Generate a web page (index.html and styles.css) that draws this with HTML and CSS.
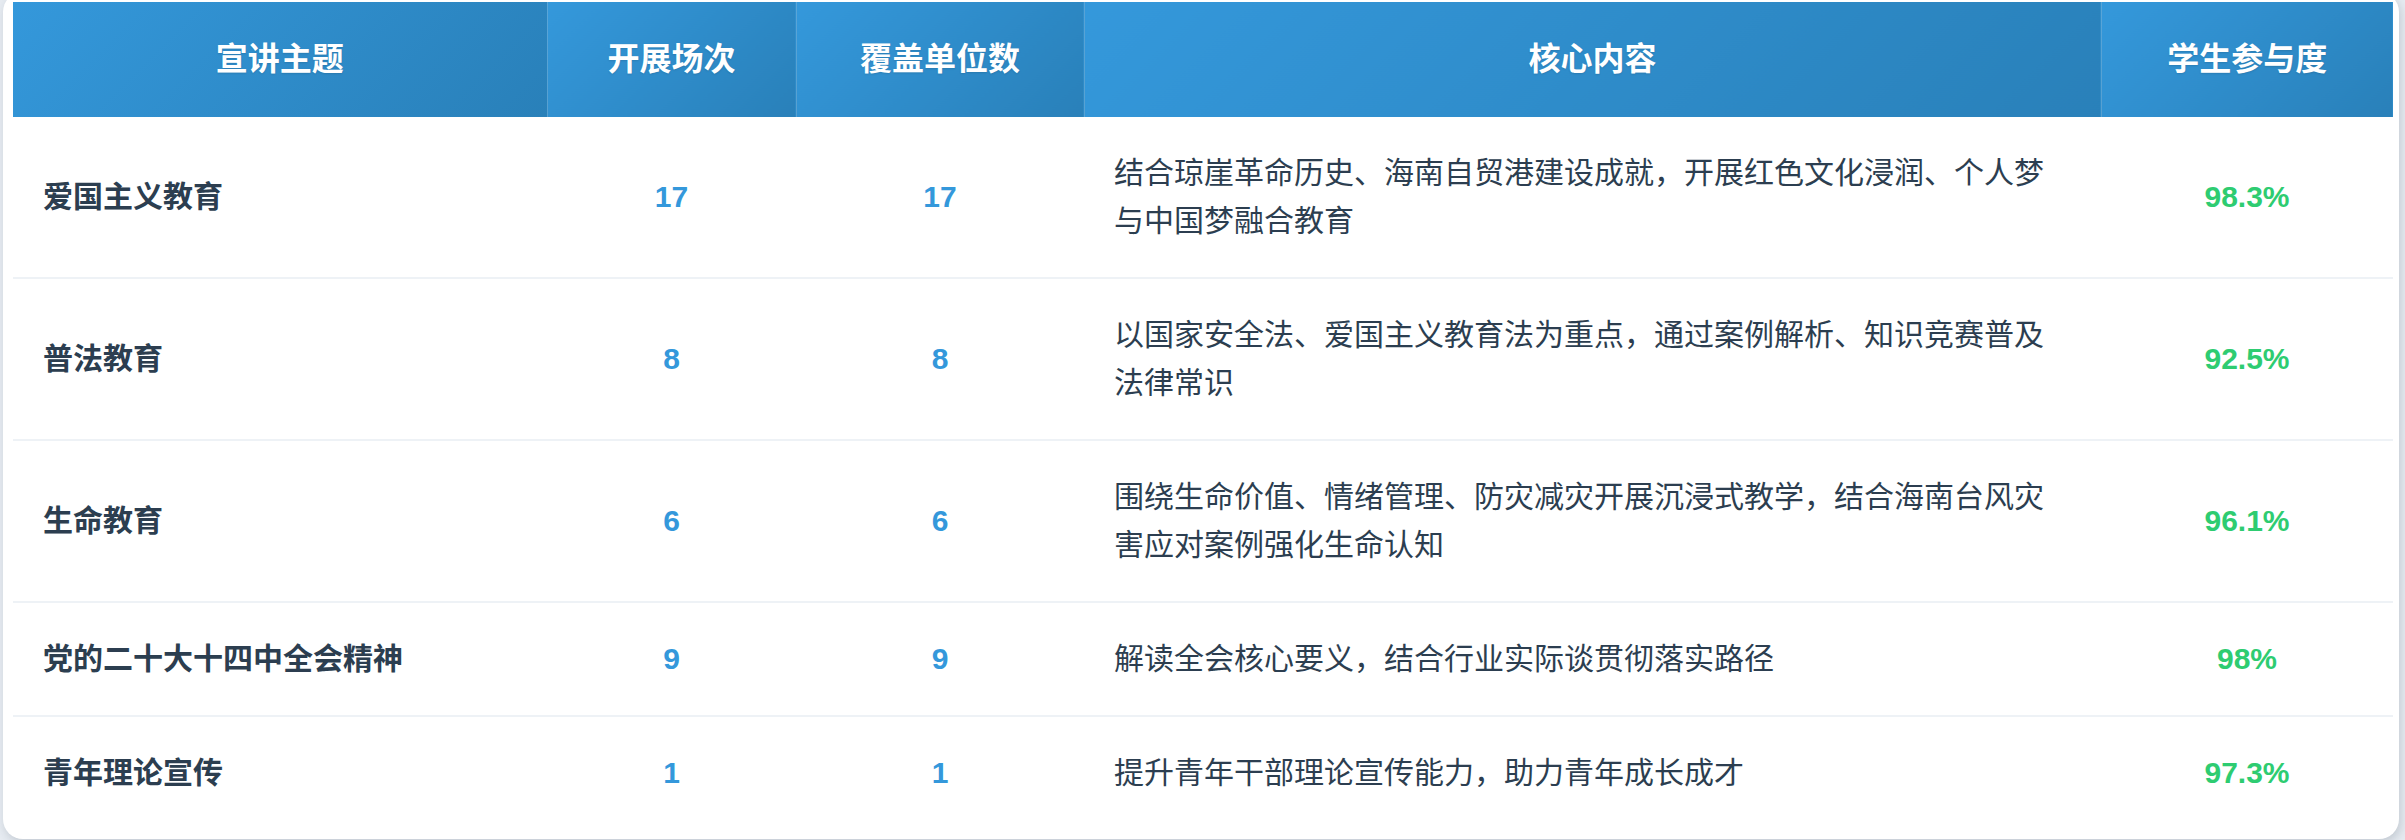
FILE: index.html
```html
<!DOCTYPE html>
<html lang="zh-CN">
<head>
<meta charset="utf-8">
<title>宣讲统计</title>
<link rel="stylesheet" href="styles.css">
</head>
<body>
<div class="card">
  <table class="data">
    <colgroup>
      <col class="w-topic">
      <col class="w-count">
      <col class="w-units">
      <col class="w-content">
      <col class="w-rate">
    </colgroup>
    <thead>
      <tr>
        <th>宣讲主题</th>
        <th>开展场次</th>
        <th>覆盖单位数</th>
        <th>核心内容</th>
        <th>学生参与度</th>
      </tr>
    </thead>
    <tbody>
      <tr>
        <td class="topic">爱国主义教育</td>
        <td class="num">17</td>
        <td class="num">17</td>
        <td class="content">结合琼崖革命历史、海南自贸港建设成就，开展红色文化浸润、个人梦与中国梦融合教育</td>
        <td class="rate">98.3%</td>
      </tr>
      <tr>
        <td class="topic">普法教育</td>
        <td class="num">8</td>
        <td class="num">8</td>
        <td class="content">以国家安全法、爱国主义教育法为重点，通过案例解析、知识竞赛普及法律常识</td>
        <td class="rate">92.5%</td>
      </tr>
      <tr>
        <td class="topic">生命教育</td>
        <td class="num">6</td>
        <td class="num">6</td>
        <td class="content">围绕生命价值、情绪管理、防灾减灾开展沉浸式教学，结合海南台风灾害应对案例强化生命认知</td>
        <td class="rate">96.1%</td>
      </tr>
      <tr>
        <td class="topic">党的二十大十四中全会精神</td>
        <td class="num">9</td>
        <td class="num">9</td>
        <td class="content">解读全会核心要义，结合行业实际谈贯彻落实路径</td>
        <td class="rate">98%</td>
      </tr>
      <tr>
        <td class="topic">青年理论宣传</td>
        <td class="num">1</td>
        <td class="num">1</td>
        <td class="content">提升青年干部理论宣传能力，助力青年成长成才</td>
        <td class="rate">97.3%</td>
      </tr>
    </tbody>
  </table>
</div>
</body>
</html>
```
FILE: styles.css
```css
html, body {
  margin: 0;
  padding: 0;
  background: #e6ebf1;
}
body {
  height: 840px;
  overflow: hidden;
}
.card {
  margin: -8px 6px 0 3px;
  background: #ffffff;
  border-radius: 20px;
  padding: 10px 6px 10px 10px;
  box-shadow: 2px 4px 10px rgba(44, 62, 80, 0.18);
}
.data {
  width: 100%;
  border-collapse: collapse;
  table-layout: fixed;
  font-family: "Liberation Sans", "Noto Sans CJK SC", sans-serif;
}
.w-topic { width: 534px; }
.w-count { width: 249px; }
.w-units { width: 288px; }
.w-content { width: 1017px; }
.w-rate { width: 292px; }

.data th {
  background: linear-gradient(135deg, #3498db 0%, #2980b9 100%);
  color: #ffffff;
  font-size: 32px;
  font-weight: 700;
  line-height: 1.6;
  padding: 32px 30px;
  text-align: center;
  border-right: 1px solid rgba(255, 255, 255, 0.2);
  text-shadow: 0 1px 2px rgba(0, 0, 0, 0.12);
}
.data th:last-child {
  border-right: none;
}
.data td {
  padding: 32px 30px;
  font-size: 30px;
  line-height: 48px;
  color: #2c3e50;
  border-bottom: 2px solid #eef2f6;
  vertical-align: middle;
}
.data tbody tr:last-child td {
  border-bottom: none;
}
.data td.topic {
  font-weight: 700;
  text-align: left;
}
.data td.num {
  text-align: center;
  color: #3498db;
  font-weight: 700;
}
.data td.content {
  text-align: left;
  font-weight: 400;
}
.data td.rate {
  text-align: center;
  color: #2ecc71;
  font-weight: 700;
}
```
